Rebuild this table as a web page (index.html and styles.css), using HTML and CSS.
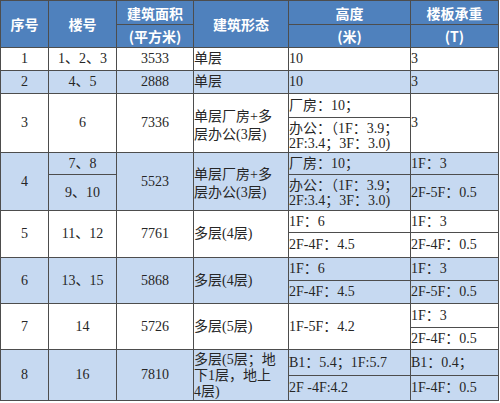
FILE: index.html
```html
<!DOCTYPE html>
<html lang="zh-CN">
<head>
<meta charset="utf-8">
<link rel="stylesheet" href="styles.css">
</head>
<body>
<table class="grid">
  <colgroup>
    <col class="c1"><col class="c2"><col class="c3"><col class="c4"><col class="c5"><col class="c6">
  </colgroup>
  <thead>
    <tr class="h-a">
      <th rowspan="2">序号</th>
      <th rowspan="2">楼号</th>
      <th>建筑面积</th>
      <th rowspan="2">建筑形态</th>
      <th>高度</th>
      <th>楼板承重</th>
    </tr>
    <tr class="h-b">
      <th>(平方米)</th>
      <th>(米)</th>
      <th>(T)</th>
    </tr>
  </thead>
  <tbody>
    <tr class="r1 white">
      <td class="ctr">1</td><td class="ctr">1、2、3</td><td class="ctr">3533</td>
      <td class="lft">单层</td><td class="lft">10</td><td class="lft">3</td>
    </tr>
    <tr class="r1 blue">
      <td class="ctr">2</td><td class="ctr">4、5</td><td class="ctr">2888</td>
      <td class="lft">单层</td><td class="lft">10</td><td class="lft">3</td>
    </tr>

    <tr class="r3a white">
      <td class="ctr" rowspan="2">3</td><td class="ctr" rowspan="2">6</td><td class="ctr" rowspan="2">7336</td>
      <td class="lft tall" rowspan="2">单层厂房+多<br>层办公(3层)</td>
      <td class="lft">厂房：10；</td>
      <td class="lft" rowspan="2">3</td>
    </tr>
    <tr class="r3b white">
      <td class="lft two">办公：（1F：3.9；<br>2F:3.4；3F：3.0)</td>
    </tr>

    <tr class="r4a blue">
      <td class="ctr" rowspan="2">4</td><td class="ctr">7、8</td><td class="ctr" rowspan="2">5523</td>
      <td class="lft tall" rowspan="2">单层厂房+多<br>层办公(3层)</td>
      <td class="lft">厂房：10；</td>
      <td class="lft">1F：3</td>
    </tr>
    <tr class="r4b blue">
      <td class="ctr">9、10</td>
      <td class="lft two">办公：（1F：3.9；<br>2F:3.4；3F：3.0)</td>
      <td class="lft">2F-5F：0.5</td>
    </tr>

    <tr class="r5a white">
      <td class="ctr" rowspan="2">5</td><td class="ctr" rowspan="2">11、12</td><td class="ctr" rowspan="2">7761</td>
      <td class="lft" rowspan="2">多层(4层)</td>
      <td class="lft">1F：6</td>
      <td class="lft">1F：3</td>
    </tr>
    <tr class="r5b white">
      <td class="lft">2F-4F：4.5</td>
      <td class="lft">2F-4F：0.5</td>
    </tr>

    <tr class="r6a blue">
      <td class="ctr" rowspan="2">6</td><td class="ctr" rowspan="2">13、15</td><td class="ctr" rowspan="2">5868</td>
      <td class="lft" rowspan="2">多层(4层)</td>
      <td class="lft">1F：6</td>
      <td class="lft">1F：3</td>
    </tr>
    <tr class="r6b blue">
      <td class="lft">2F-4F：4.5</td>
      <td class="lft">2F-5F：0.5</td>
    </tr>

    <tr class="r7a white">
      <td class="ctr" rowspan="2">7</td><td class="ctr" rowspan="2">14</td><td class="ctr" rowspan="2">5726</td>
      <td class="lft" rowspan="2">多层(5层)</td>
      <td class="lft" rowspan="2">1F-5F：4.2</td>
      <td class="lft">1F：3</td>
    </tr>
    <tr class="r7b white">
      <td class="lft">2F-4F：0.5</td>
    </tr>

    <tr class="r8a blue">
      <td class="ctr" rowspan="2">8</td><td class="ctr" rowspan="2">16</td><td class="ctr" rowspan="2">7810</td>
      <td class="lft three" rowspan="2">多层(5层；地<br>下1层，地上<br>4层)</td>
      <td class="lft">B1：5.4；1F:5.7</td>
      <td class="lft">B1：0.4；</td>
    </tr>
    <tr class="r8b blue">
      <td class="lft">2F -4F:4.2</td>
      <td class="lft">1F-4F：0.5</td>
    </tr>
  </tbody>
</table>
</body>
</html>
```

FILE: styles.css
```css
html, body {
  margin: 0;
  padding: 0;
  background: #ffffff;
}

.grid {
  border-collapse: collapse;
  table-layout: fixed;
  width: 498px;
  font-family: "Liberation Serif", "Noto Sans CJK SC", serif;
  font-size: 14px;
  color: #262626;
}

.c1 { width: 48px; }
.c2 { width: 68px; }
.c3 { width: 77px; }
.c4 { width: 95px; }
.c5 { width: 122px; }
.c6 { width: 88px; }

.grid th,
.grid td {
  border: 1px solid #4d4d4d;
  padding: 0;
  vertical-align: middle;
  line-height: 16px;
  overflow: hidden;
}

.grid th {
  background: #4f81bd;
  color: #ffffff;
  font-family: "Noto Sans CJK SC", "Noto Sans", sans-serif;
  font-weight: 700;
  font-size: 14px;
  text-align: center;
}

.h-a { height: 24px; }
.h-b { height: 23px; }

.r1 { height: 23px; }
.r3a { height: 24px; }
.r3b { height: 35px; }
.r4a { height: 22px; }
.r4b { height: 36px; }
.r5a { height: 22px; }
.r5b { height: 25px; }
.r6a { height: 23px; }
.r6b { height: 23px; }
.r7a { height: 24px; }
.r7b { height: 22px; }
.r8a { height: 26px; }
.r8b { height: 25px; }

.white td { background: #ffffff; }
.blue td { background: #c6d9f1; }

.ctr { text-align: center; }
.lft { text-align: left; padding-left: 3px; white-space: nowrap; }

.grid .tall { line-height: 18px; padding-top: 5px; }
.grid .two { line-height: 15px; padding-top: 1px; }
.grid .three { line-height: 16px; padding-top: 2px; }
```
